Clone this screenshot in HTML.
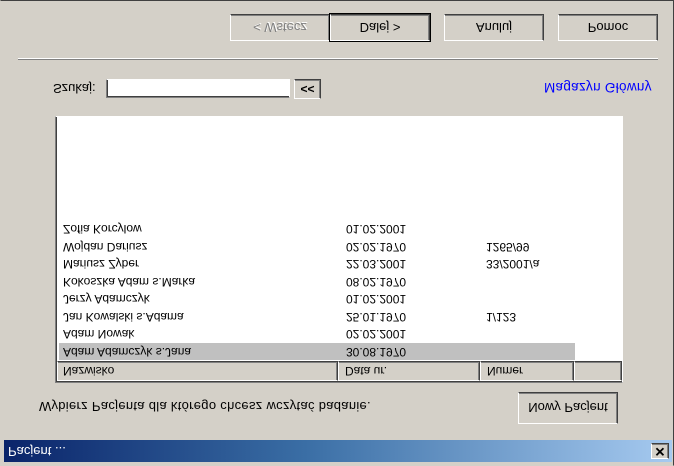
<!DOCTYPE html>
<html><head><meta charset="utf-8"><style>
*{margin:0;padding:0;box-sizing:border-box}
body{width:674px;height:466px;overflow:hidden;background:#d4d0c8;font-family:"Liberation Sans",sans-serif;font-size:11px;color:#000}
#w{position:absolute;left:0;top:0;width:674px;height:466px;transform:scaleY(-1);background:#d4d0c8;border:1px solid #404040;border-top-color:#d4d0c8;border-left-color:#d4d0c8}
.a{position:absolute}
.btn{position:absolute;background:#d4d0c8;border:1px solid;border-color:#fff #404040 #404040 #fff;box-shadow:inset -1px -1px 0 #808080;display:flex;align-items:center;justify-content:center;font-size:13px}
.row{position:absolute;left:3px;width:516px;height:17px;line-height:17px;font-size:12px}
.row span{position:absolute}
</style></head><body>
<div id="w">
<div class="a" style="left:3px;top:3px;width:668px;height:22px;background:linear-gradient(90deg,#0a246a,#3a6ea5 45%,#a6caf0);color:#fff;font-size:13px;line-height:22px;padding-left:4px">Pacjent ...</div>
<div class="btn" style="left:650px;top:6px;width:18px;height:16px;font-weight:bold;font-size:13px">✕</div>

<div class="a" style="left:38px;top:51px;font-size:13px;letter-spacing:0.3px">Wybierz Pacjenta dla którego chcesz wczytać badanie.</div>
<div class="btn" style="left:517px;top:41px;width:100px;height:32px">Nowy Pacjent</div>

<div class="a" style="left:54px;top:82px;width:568px;height:267px;background:#fff;border:1px solid;border-color:#808080 #fff #fff #808080;box-shadow:inset 1px 1px 0 #404040">
 <div class="a" style="left:1px;top:1px;width:565px;height:20px;background:#d4d0c8"></div>
 <div class="btn" style="left:1px;top:1px;width:281px;height:20px;justify-content:flex-start;padding-left:5px;font-size:12px">Nazwisko</div>
 <div class="btn" style="left:282px;top:1px;width:142px;height:20px;justify-content:flex-start;padding-left:6px;font-size:12px">Data ur.</div>
 <div class="btn" style="left:424px;top:1px;width:94px;height:20px;justify-content:flex-start;padding-left:6px;font-size:12px">Numer</div>
 <div class="btn" style="left:518px;top:1px;width:48px;height:20px"></div>
 <div class="row" style="top:22px;background:#c0c0c0"><span style="left:4px">Adam Adamczyk s.Jana</span><span style="left:287px">30.08.1970</span></div>
 <div class="row" style="top:39.5px"><span style="left:4px">Adam Nowak</span><span style="left:287px">02.02.2001</span></div>
 <div class="row" style="top:57px"><span style="left:4px">Jan Kowalski s.Adama</span><span style="left:287px">25.01.1970</span><span style="left:427px">1/123</span></div>
 <div class="row" style="top:74.5px"><span style="left:4px">Jerzy Adamczyk</span><span style="left:287px">01.02.2001</span></div>
 <div class="row" style="top:92px"><span style="left:4px">Kokoszka Adam s.Marka</span><span style="left:287px">08.02.1970</span></div>
 <div class="row" style="top:109.5px"><span style="left:4px">Mariusz Zyber</span><span style="left:287px">22.03.2001</span><span style="left:427px">33/2001/a</span></div>
 <div class="row" style="top:127px"><span style="left:4px">Wojdan Dariusz</span><span style="left:287px">02.02.1970</span><span style="left:427px">1265/99</span></div>
 <div class="row" style="top:144.5px"><span style="left:4px">Zofia Korcylow</span><span style="left:287px">01.02.2001</span></div>
</div>

<div class="a" style="left:52px;top:369px;font-size:13px">Szukaj:</div>
<div class="a" style="left:105px;top:367px;width:184px;height:19px;background:#fff;border:1px solid;border-color:#808080 #fff #fff #808080;box-shadow:inset 1px 1px 0 #404040"></div>
<div class="btn" style="left:293px;top:366px;width:27px;height:20px;font-weight:bold;font-size:12px">&lt;&lt;</div>
<div class="a" style="left:543px;top:370px;color:#0000ff;font-size:13.5px;letter-spacing:0.3px">Magazyn Główny</div>

<div class="a" style="left:17px;top:405px;width:640px;height:1px;background:#808080"></div>
<div class="a" style="left:17px;top:406px;width:640px;height:1px;background:#fff"></div>

<div class="btn" style="left:229px;top:424px;width:100px;height:27px;color:#808080;text-shadow:1px 1px 0 #fff">&lt; Wstecz</div>
<div class="btn" style="left:329px;top:424px;width:100px;height:27px;outline:1px solid #000">Dalej &gt;</div>
<div class="btn" style="left:443px;top:424px;width:100px;height:27px">Anuluj</div>
<div class="btn" style="left:557px;top:424px;width:100px;height:27px">Pomoc</div>
</div>
</body></html>
